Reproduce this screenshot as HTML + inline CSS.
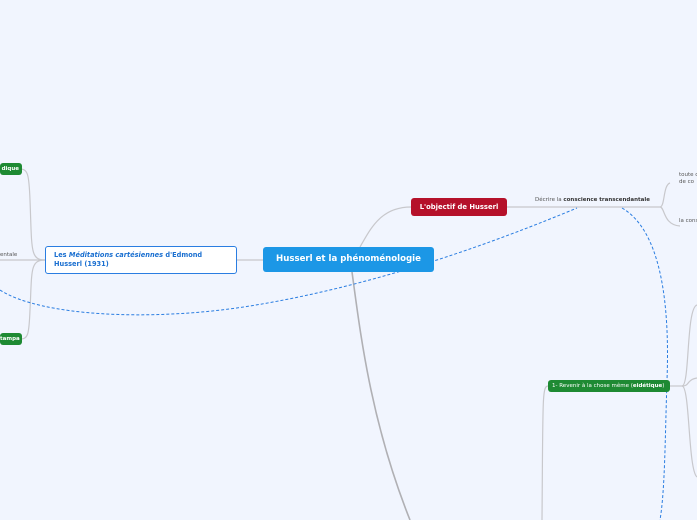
<!DOCTYPE html>
<html><head><meta charset="utf-8"><style>
body{margin:0;width:697px;height:520px;background:#f1f5fe;overflow:hidden;position:relative;font-family:"DejaVu Sans",sans-serif}
.b{position:absolute;box-sizing:border-box;border-radius:3px;color:#fff;font-weight:bold;white-space:nowrap}
.t{position:absolute;font-size:5.5px;color:#555;white-space:nowrap}
</style></head><body>
<svg width="697" height="520" style="position:absolute;left:0;top:0">
<g fill="none" stroke="#c8c8cc" stroke-width="1.2">
<path d="M237 260 H263"/>
<path d="M45 260 C30 260,32 250,30 200 C29 175,28 169,20 169"/>
<path d="M45 260 C30 260,32 270,30 310 C29 335,28 339,20 339"/>
<path d="M45 260 H0"/>
<path d="M360 247 C370 230,380 207,411 207"/>
<path d="M507 207 H660"/>
<path d="M660 207 C665 207,663 185,670 183"/>
<path d="M660 207 C665 207,663 225,680 226"/>
<path d="M352 272 C360 330,370 420,410 520" stroke="#b0b0b4" stroke-width="1.6"/>
<path d="M548 386 C542 386,543 400,542 520"/>
<path d="M670 386 H682"/>
<path d="M682 386 C690 386,686 308,697 305"/>
<path d="M682 386 C690 386,686 380,697 378"/>
<path d="M682 386 C690 386,688 470,697 477"/>
</g>
<g fill="none" stroke="#2a7de1" stroke-width="1" stroke-dasharray="3,2">
<path d="M0 290 C40 316,150 322,250 306 C380 285,500 240,577 208"/>
<path d="M622 208 C660 230,670 300,667 380 C665 440,665 490,660 520"/>
</g>
</svg>
<div class="b" style="left:263px;top:247px;width:171px;height:25px;background:#1c97e6;font-size:8.6px;line-height:25px;text-align:center">Husserl et la phénoménologie</div>
<div class="b" style="left:45px;top:246px;width:192px;height:28px;background:#fff;border:1px solid #2a7de1;color:#1a6fd0;font-size:6.6px;line-height:9px;padding:4px 8px;white-space:normal">Les <i>Méditations cartésiennes</i> d'Edmond Husserl (1931)</div>
<div class="b" style="left:411px;top:198px;width:96px;height:18px;background:#b5112a;font-size:6.8px;line-height:18px;text-align:center">L'objectif de Husserl</div>
<div class="b" style="left:0;top:163px;width:22px;height:12px;background:#1e8a33;font-size:5.5px;line-height:12px;text-align:right;padding-right:3px">dique</div>
<div class="b" style="left:0;top:333px;width:22px;height:12px;background:#1e8a33;font-size:5.5px;line-height:12px;text-align:right;padding-right:3px">tampa</div>
<div class="b" style="left:548px;top:380px;width:122px;height:12px;background:#1e8a33;font-size:5.5px;line-height:12px;padding-left:4px;font-weight:normal">1- Revenir à la chose même (<b>eidétique</b>)</div>
<div class="t" style="left:0;top:252px">entale</div>
<div class="t" style="left:535px;top:197px">Décrire la <b style="color:#333">conscience transcendantale</b></div>
<div class="t" style="left:679px;top:172px;line-height:7px">toute c<br>de co</div>
<div class="t" style="left:679px;top:218px">la cons</div>
</body></html>
